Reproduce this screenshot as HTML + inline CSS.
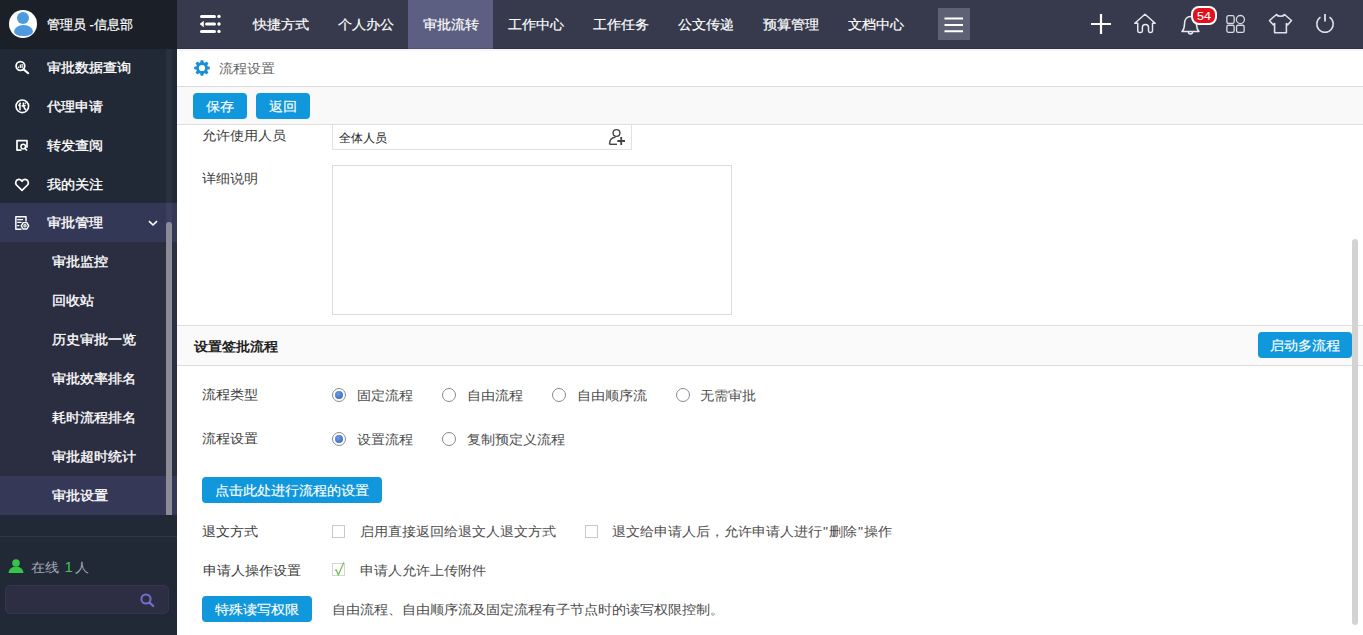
<!DOCTYPE html>
<html><head><meta charset="utf-8">
<style>
*{box-sizing:border-box;margin:0;padding:0}
html,body{width:1363px;height:635px;overflow:hidden;background:#fff}
body{font-family:"Liberation Sans",sans-serif;font-size:14px;color:#333;position:relative}
.abs{position:absolute}
.t{position:absolute;white-space:nowrap;line-height:18px;font-size:14px;transform:scaleY(.92);transform-origin:50% 50%}
.w{color:#fff;-webkit-text-stroke:0.2px #fff}
#side{left:0;top:0;width:177px;height:635px;background:#212836}
.mi{position:absolute;left:0;width:177px;height:39px}
.mi .t{left:47px;top:10px;color:#fff;-webkit-text-stroke:0.35px #fff}
.sub .t{left:52px}
.mi svg{position:absolute}
.nav{position:absolute;top:0;width:85px;height:49px}
.nav .t{left:15px;top:15px;color:#fff}
.btn{position:absolute;background:#1197db;border-radius:4px;height:26px}
.btn .t{color:#fff;top:4px;-webkit-text-stroke:0.15px #fff}
.lb{color:#3c3c3c}
.op{color:#4d4d4d}
.radio{position:absolute;width:14px;height:14px;border-radius:50%;border:1px solid #8a8a8a;background:#fff}
.radio.on::after{content:"";position:absolute;left:2px;top:2px;width:8px;height:8px;border-radius:50%;background:radial-gradient(circle at 40% 35%,#6d9be6,#2f5fb8)}
.chk{position:absolute;width:13px;height:13px;border:1px solid #c9c9c9;background:#fff}
.ic{stroke:#fff;fill:none}
</style></head>
<body>
<!-- ============ SIDEBAR ============ -->
<div id="side" class="abs">
  <div class="abs" style="left:0;top:0;width:177px;height:49px;background:#1b1f28"></div>
  <div class="abs" style="left:9px;top:10px;width:28px;height:28px;border-radius:50%;background:#fff;overflow:hidden">
    <div class="abs" style="left:7.5px;top:1.5px;width:12px;height:12px;border-radius:50%;background:#4e9ae0"></div>
    <div class="abs" style="left:4.5px;top:14.5px;width:19px;height:11px;border-radius:50% 50% 45% 45%/60% 60% 40% 40%;background:#4e9ae0"></div>
  </div>
  <div class="t w" style="left:47px;top:16px;font-size:13px;transform:none">管理员 -信息部</div>

  <div class="mi" style="top:48px">
    <svg style="left:14px;top:11px" width="17" height="17" viewBox="0 0 17 17"><circle cx="6.4" cy="7" r="4.3" class="ic" stroke-width="1.8"/><path d="M9.6 10.4 L14.2 14.2" class="ic" stroke-width="2.1" stroke-linecap="round"/><path d="M4.5 9V7.4M6.3 9V5.6M8.1 9V5" class="ic" stroke-width="1.2"/></svg>
    <div class="t">审批数据查询</div></div>
  <div class="mi" style="top:87px">
    <svg style="left:14px;top:11px" width="17" height="17" viewBox="0 0 17 17"><circle cx="8.3" cy="8.3" r="6.3" class="ic" stroke-width="1.6"/><path d="M6.6 4.6 L4.6 8 M6 6.6 V12.2 M7.6 8 L11.6 7.4 M9.3 4.6 C9.3 8.5 10 10.8 12.2 12 M10.9 4.8 L11.7 5.6" stroke="#fff" stroke-width="1.5" fill="none"/></svg>
    <div class="t">代理申请</div></div>
  <div class="mi" style="top:126px">
    <svg style="left:14px;top:12px" width="17" height="17" viewBox="0 0 17 17"><path d="M7.6 12.1 H3 V2.7 H13 V9.8" class="ic" stroke-width="1.7" stroke-linejoin="round"/><circle cx="9.2" cy="8.6" r="2.3" class="ic" stroke-width="1.5"/><path d="M10.8 10.3 L13 12.5" class="ic" stroke-width="1.7"/></svg>
    <div class="t">转发查阅</div></div>
  <div class="mi" style="top:165px">
    <svg style="left:14px;top:12px" width="17" height="17" viewBox="0 0 17 17"><path d="M8 13.4 L2.5 8 C0.9 6.2 1.7 2.4 4.8 2.4 C6.3 2.4 7.4 3.3 8 4.3 C8.6 3.3 9.7 2.4 11.2 2.4 C14.3 2.4 15.1 6.2 13.5 8 Z" class="ic" stroke-width="1.7" stroke-linejoin="round"/></svg>
    <div class="t">我的关注</div></div>
  <div class="mi" style="top:203px;background:#343857">
    <svg style="left:13px;top:12px" width="18" height="17" viewBox="0 0 18 17"><path d="M8.6 14.25 H2.85 V1.85 H13 V6.6" class="ic" stroke-width="1.5" stroke-linejoin="round"/><path d="M4.2 4.6H10.1M4.2 7.4H8.6M4.2 10.6H6.4" class="ic" stroke-width="1.3"/><path d="M15.7 10.8 L13.85 14 H10.15 L8.3 10.8 L10.15 7.6 H13.85 Z" class="ic" stroke-width="1.4" stroke-linejoin="round"/><circle cx="12" cy="10.8" r="1.2" class="ic" stroke-width="1.1"/></svg>
    <div class="t">审批管理</div>
    <svg style="left:148px;top:17px" width="10" height="7" viewBox="0 0 10 7"><path d="M1 1.2 L5 5 L9 1.2" class="ic" stroke-width="1.6"/></svg>
  </div>
  <div class="abs" style="left:0;top:242px;width:177px;height:273px;background:#2b2d40"></div>
  <div class="mi sub" style="top:242px"><div class="t">审批监控</div></div>
  <div class="mi sub" style="top:281px"><div class="t">回收站</div></div>
  <div class="mi sub" style="top:320px"><div class="t">历史审批一览</div></div>
  <div class="mi sub" style="top:359px"><div class="t">审批效率排名</div></div>
  <div class="mi sub" style="top:398px"><div class="t">耗时流程排名</div></div>
  <div class="mi sub" style="top:437px"><div class="t">审批超时统计</div></div>
  <div class="mi sub" style="top:476px;background:#353857"><div class="t">审批设置</div></div>
  <div class="abs" style="left:166px;top:49px;width:6px;height:466px;background:rgba(255,255,255,0.045)"></div>
  <div class="abs" style="left:166px;top:222px;width:6px;height:293px;background:#8b8b97;border-radius:3px 3px 0 0"></div>
    <div class="abs" style="left:0;top:536px;width:177px;height:1px;background:#30374a"></div>
  <svg class="abs" style="left:8px;top:559px" width="17" height="14" viewBox="0 0 17 14"><circle cx="8" cy="4" r="3.8" fill="#33c648"/><path d="M0.5 14 C1 9.5 4 7.8 8 7.8 C12 7.8 15 9.5 15.5 14 Z" fill="#33c648"/></svg>
  <div class="t" style="left:31px;top:558px;color:#a3abb8">在线</div><div class="t" style="left:64.5px;top:558px;color:#48c257;font-size:15px">1</div><div class="t" style="left:75px;top:558px;color:#a3abb8">人</div>
  <div class="abs" style="left:5px;top:585px;width:164px;height:29px;background:#2d2d43;border:1px solid #34364b;border-radius:5px"></div>
  <svg class="abs" style="left:140px;top:593px" width="16" height="15" viewBox="0 0 16 15"><circle cx="6" cy="6" r="4.6" fill="none" stroke="#776ecb" stroke-width="2"/><path d="M9.4 9.4 L13.2 13" stroke="#776ecb" stroke-width="2.2" stroke-linecap="round"/></svg>
</div>

<!-- ============ TOP NAV ============ -->
<div class="abs" style="left:177px;top:0;width:1186px;height:49px;background:#363a4c"></div>
<svg class="abs" style="left:198px;top:13px" width="25" height="22" viewBox="0 0 25 22">
  <path d="M3.5 3.4H16.5M8.5 11H16.5M3.5 18.4H16.5" stroke="#fff" stroke-width="3" stroke-linecap="round"/>
  <circle cx="21" cy="3.4" r="1.7" fill="#fff"/><circle cx="21" cy="11" r="1.7" fill="#fff"/><circle cx="21" cy="18.4" r="1.7" fill="#fff"/>
  <path d="M1.6 11 L5.8 7.8 V14.2 Z" fill="#fff"/>
</svg>
<div class="nav" style="left:238px"><div class="t w">快捷方式</div></div>
<div class="nav" style="left:323px"><div class="t w">个人办公</div></div>
<div class="nav" style="left:408px;background:#5c5f82"><div class="t w">审批流转</div></div>
<div class="nav" style="left:493px"><div class="t w">工作中心</div></div>
<div class="nav" style="left:578px"><div class="t w">工作任务</div></div>
<div class="nav" style="left:663px"><div class="t w">公文传递</div></div>
<div class="nav" style="left:748px"><div class="t w">预算管理</div></div>
<div class="nav" style="left:833px"><div class="t w">文档中心</div></div>
<div class="abs" style="left:938px;top:8px;width:32px;height:32px;background:#5e6073"></div>
<svg class="abs" style="left:938px;top:8px" width="32" height="32" viewBox="0 0 32 32"><path d="M6.5 10.5H25M6.5 17H25M6.5 23.3H25" stroke="#fff" stroke-width="2"/></svg>
<!-- right icons -->
<svg class="abs" style="left:1090px;top:13px" width="22" height="22" viewBox="0 0 22 22"><path d="M11 1V21M1 11H21" stroke="#fff" stroke-width="2.2"/></svg>
<svg class="abs" style="left:1133px;top:12px" width="24" height="23" viewBox="0 0 24 23"><path d="M12 2.2 L1.8 11.2 H4.75 V18.8 Q4.75 20.4 6.3 20.4 H7.9 Q9.4 20.4 9.4 18.8 V15.4 C9.4 11.4 15.5 11.4 15.5 15.4 V18.8 Q15.5 20.4 17 20.4 H18 Q19.5 20.4 19.5 18.8 V11.2 H22.2 Z" fill="none" stroke="#e8e8ee" stroke-width="1.5" stroke-linejoin="round"/></svg>
<svg class="abs" style="left:1179px;top:12px" width="24" height="24" viewBox="0 0 24 24"><path d="M3 19.5 C5 17.5 5.5 15.5 5.5 12 C5.5 7.5 8 4.5 11.5 4.5 C15 4.5 17.5 7.5 17.5 12 C17.5 15.5 18 17.5 20 19.5 Z" fill="none" stroke="#e8e8ee" stroke-width="1.5" stroke-linejoin="round"/><path d="M9.5 20 C9.5 22.5 13.5 22.5 13.5 20" fill="none" stroke="#e8e8ee" stroke-width="1.5"/></svg>
<div class="abs" style="left:1191px;top:6px;width:26px;height:19px;border-radius:8px;background:#e5101c;border:2px solid #fff"></div>
<div class="t" style="left:1197px;top:8px;color:#fff;font-size:12.5px;line-height:16px;-webkit-text-stroke:0.1px #fff">54</div>
<svg class="abs" style="left:1225px;top:14px" width="21" height="20" viewBox="0 0 21 20"><g fill="none" stroke="#d9d9e2" stroke-width="1.3"><rect x="1.85" y="1.65" width="7.3" height="7.8" rx="1.6"/><circle cx="15.4" cy="5.55" r="4.05"/><rect x="1.85" y="11.25" width="7.3" height="7.1" rx="1.6"/><rect x="11.55" y="11.25" width="7.6" height="7.1" rx="1.6"/></g></svg>
<svg class="abs" style="left:1268px;top:12px" width="25" height="24" viewBox="0 0 25 24"><path d="M8.5 2.5 L1.5 8.5 L5.2 12.8 L6.6 11.6 V20.8 H18.4 V11.6 L19.8 12.8 L23.5 8.5 L16.5 2.5 C15.2 4.9 9.8 4.9 8.5 2.5 Z" fill="none" stroke="#e0e0e8" stroke-width="1.6" stroke-linejoin="round"/></svg>
<svg class="abs" style="left:1314px;top:12px" width="22" height="23" viewBox="0 0 22 23"><path d="M6.5 5.2 A8.2 8.2 0 1 0 15.5 5.2" fill="none" stroke="#e0e0e8" stroke-width="1.6"/><path d="M11 2 V9.6" stroke="#e0e0e8" stroke-width="1.8"/></svg>

<!-- ============ CONTENT ============ -->
<div class="abs" style="left:177px;top:49px;width:1186px;height:38px;background:#fff"></div>
<div class="abs" style="left:177px;top:86px;width:1186px;height:1px;background:#dcdcdc"></div>
<div class="abs" style="left:177px;top:49px;width:1186px;height:2px;background:#f6f6fa"></div>
<div class="abs" style="left:177px;top:48px;width:1186px;height:1px;background:rgba(0,0,0,0.12)"></div>
<svg class="abs" style="left:194px;top:60px" width="16" height="16" viewBox="0 0 16 16"><g fill="#1a8fd8"><rect x="6.4" y="0.2" width="3.2" height="15.6" rx="0.8" transform="rotate(0 8 8)"/><rect x="6.4" y="0.2" width="3.2" height="15.6" rx="0.8" transform="rotate(45 8 8)"/><rect x="6.4" y="0.2" width="3.2" height="15.6" rx="0.8" transform="rotate(90 8 8)"/><rect x="6.4" y="0.2" width="3.2" height="15.6" rx="0.8" transform="rotate(135 8 8)"/><circle cx="8" cy="8" r="5.9"/></g><circle cx="8" cy="8" r="3.1" fill="#fff"/></svg>
<div class="t" style="left:219px;top:59px;color:#666">流程设置</div>
<div class="abs" style="left:177px;top:87px;width:1186px;height:37px;background:#f9f9f9"></div>
<div class="abs" style="left:177px;top:124px;width:1186px;height:1px;background:#dedede"></div>
<div class="btn" style="left:193px;top:93px;width:54px"><div class="t" style="left:13px">保存</div></div>
<div class="btn" style="left:256px;top:93px;width:54px"><div class="t" style="left:13px">返回</div></div>

<!-- form upper -->
<div class="t lb" style="left:202px;top:126px">允许使用人员</div>
<div class="abs" style="left:332px;top:125px;width:300px;height:25px;border:1px solid #e2e2e2;border-top:none;background:#fff"></div>
<div class="t" style="left:339px;top:128.5px;color:#222;font-size:12px;transform:none">全体人员</div>
<svg class="abs" style="left:607px;top:127px" width="20" height="19" viewBox="0 0 20 19"><circle cx="9.5" cy="6" r="3.4" fill="none" stroke="#444" stroke-width="1.4"/><path d="M2.5 17.3 C2.5 13 5 10.6 8.5 10.3" fill="none" stroke="#444" stroke-width="1.4"/><path d="M2.5 17.3 H10" stroke="#444" stroke-width="1.4"/><path d="M14.2 10 V18 M10.3 14 H18" stroke="#444" stroke-width="1.8"/></svg>
<div class="t lb" style="left:202px;top:169px">详细说明</div>
<div class="abs" style="left:332px;top:165px;width:400px;height:150px;border:1px solid #dcdcdc;background:#fff"></div>

<!-- section header -->
<div class="abs" style="left:177px;top:325px;width:1186px;height:41px;background:#fafafa;border-top:1px solid #dcdcdc;border-bottom:1px solid #dcdcdc"></div>
<div class="t" style="left:194px;top:337px;color:#222;font-weight:bold">设置签批流程</div>
<div class="btn" style="left:1258px;top:332px;width:94px"><div class="t" style="left:12px">启动多流程</div></div>

<!-- radios -->
<div class="t lb" style="left:202px;top:385px">流程类型</div>
<div class="radio on" style="left:332px;top:388px"></div><div class="t op" style="left:357px;top:386px">固定流程</div>
<div class="radio" style="left:442px;top:388px"></div><div class="t op" style="left:467px;top:386px">自由流程</div>
<div class="radio" style="left:552px;top:388px"></div><div class="t op" style="left:577px;top:386px">自由顺序流</div>
<div class="radio" style="left:676px;top:388px"></div><div class="t op" style="left:700px;top:386px">无需审批</div>

<div class="t lb" style="left:202px;top:429px">流程设置</div>
<div class="radio on" style="left:332px;top:432px"></div><div class="t op" style="left:357px;top:430px">设置流程</div>
<div class="radio" style="left:442px;top:432px"></div><div class="t op" style="left:467px;top:430px">复制预定义流程</div>

<div class="btn" style="left:202px;top:477px;width:180px"><div class="t" style="left:13px">点击此处进行流程的设置</div></div>

<div class="t lb" style="left:202px;top:522px">退文方式</div>
<div class="chk" style="left:332px;top:525px"></div><div class="t op" style="left:360px;top:522px">启用直接返回给退文人退文方式</div>
<div class="chk" style="left:585px;top:525px"></div><div class="t op" style="left:612px;top:522px">退文给申请人后，允许申请人进行<span style="margin:0 1px">"</span>删除<span style="margin:0 1px">"</span>操作</div>

<div class="t lb" style="left:203px;top:561px">申请人操作设置</div>
<div class="chk" style="left:332px;top:563px;border-color:#d5d5d5"></div><svg class="abs" style="left:332px;top:561px" width="14" height="16" viewBox="0 0 14 16"><path d="M3 9.5 L4.2 8.8 L6.3 14 L11.8 1.5" fill="none" stroke="#6cc04a" stroke-width="1.2" stroke-linejoin="round"/></svg>
<div class="t op" style="left:360px;top:561px">申请人允许上传附件</div>

<div class="btn" style="left:202px;top:596px;width:110px"><div class="t" style="left:13px">特殊读写权限</div></div>
<div class="t op" style="left:332px;top:600px">自由流程、自由顺序流及固定流程有子节点时的读写权限控制。</div>

<!-- right scrollbar -->
<div class="abs" style="left:1352px;top:239px;width:6px;height:386px;background:#d3d3d3;border-radius:3px"></div>
</body></html>
